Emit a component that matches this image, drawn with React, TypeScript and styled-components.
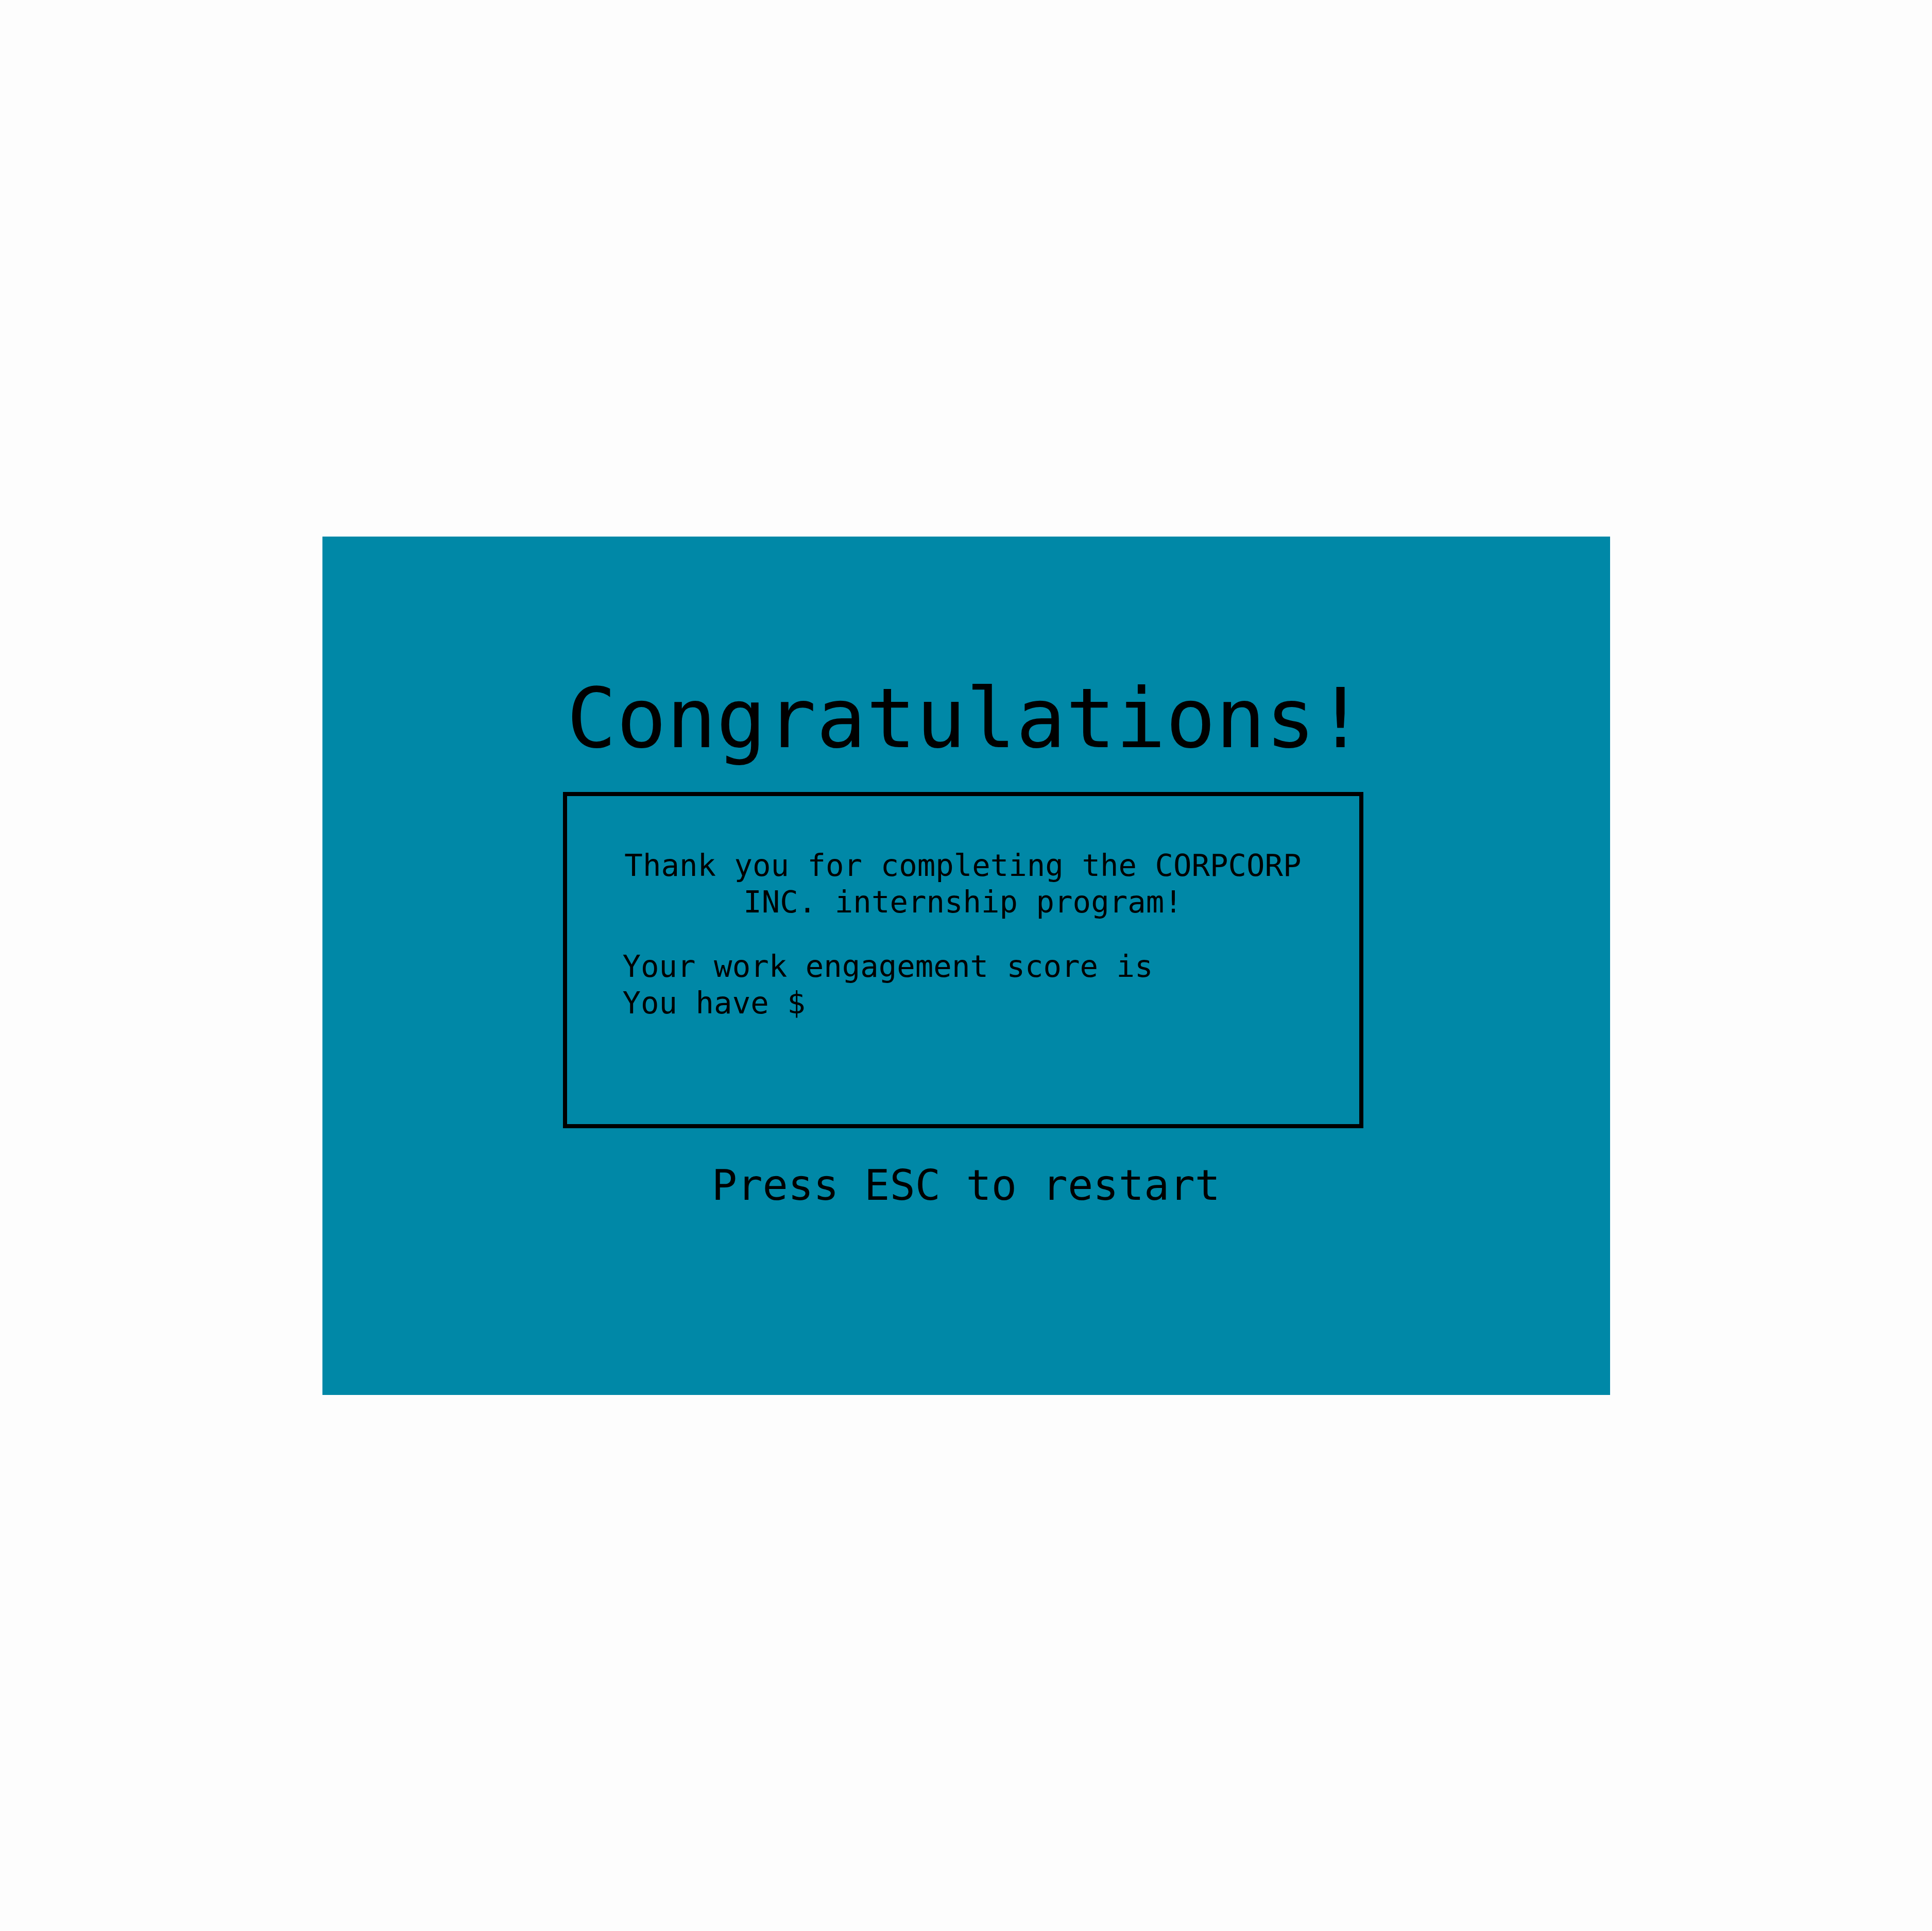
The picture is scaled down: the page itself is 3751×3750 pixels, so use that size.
import React from "react";
import styled, { createGlobalStyle } from "styled-components";

const GlobalStyle = createGlobalStyle`
  html, body, #root {
    margin: 0;
    padding: 0;
    height: 100%;
  }
  body {
    background: #fdfdfd;
    font-family: "DejaVu Sans Mono", "Liberation Mono", monospace;
    color: #000;
  }
`;

const Page = styled.div`
  min-height: 100%;
  display: flex;
  align-items: center;
  justify-content: center;
`;

const Panel = styled.section`
  width: 2500px;
  height: 1667px;
  box-sizing: border-box;
  background: #0088a7;
  display: flex;
  flex-direction: column;
  align-items: center;
  padding-top: 257px;
`;

const Title = styled.h1`
  margin: 0 0 46px;
  font-family: "DejaVu Sans Mono", "Liberation Mono", monospace;
  font-weight: 400;
  font-size: 161px;
  line-height: 1.2;
  color: #000;
`;

const Card = styled.div`
  width: 1554px;
  height: 653px;
  box-sizing: border-box;
  margin-right: 12px;
  border: 8px solid #000;
  padding: 99px 108px 0;
`;

const Paragraph = styled.p<{ $align: "center" | "left"; $gap?: number }>`
  margin: ${(p) => p.$gap ?? 0}px 0 0;
  font-size: 59px;
  line-height: 71px;
  text-align: ${(p) => p.$align};
`;

const Hint = styled.p`
  margin: 62px 0 0;
  font-size: 82px;
  line-height: 1.2;
`;

export default function App() {
  return (
    <>
      <GlobalStyle />
      <Page>
        <Panel>
          <Title>Congratulations!</Title>
          <Card>
            <Paragraph $align="center">
              Thank you for completing the CORPCORP INC. internship program!
            </Paragraph>
            <Paragraph $align="left" $gap={54}>
              Your work engagement score is
              <br />
              You have $
            </Paragraph>
          </Card>
          <Hint>Press ESC to restart</Hint>
        </Panel>
      </Page>
    </>
  );
}
